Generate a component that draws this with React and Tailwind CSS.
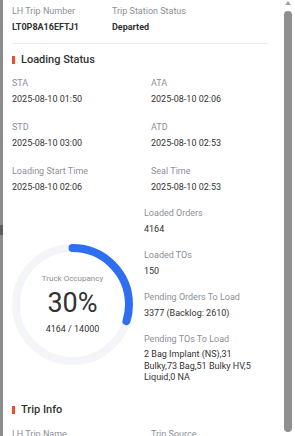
import React from 'react';

function Field({ label, value, bold }) {
    return (
        <div>
            <div className="text-[9px] leading-[12px] text-[#8b9099]">{label}</div>
            <div className={`mt-1 text-[9px] leading-[12px] text-[#333] ${bold ? 'font-bold' : ''}`}>{value}</div>
        </div>
    );
}

function SectionTitle({ children }) {
    return (
        <div className="flex items-center gap-[6px]">
            <span className="h-[8px] w-[3px] bg-[#ee4d2d]" />
            <span className="text-[11px] leading-[14px] font-medium text-[#333]">{children}</span>
        </div>
    );
}

function Occupancy({ loaded, capacity }) {
    const pct = loaded / capacity;
    const r = 56.5;
    const c = 2 * Math.PI * r;
    return (
        <div className="relative h-[121px] w-[121px]">
            <svg width="121" height="121" viewBox="0 0 121 121" className="-rotate-90">
                <circle cx="60.5" cy="60.5" r={r} fill="none" stroke="#f3f5f9" strokeWidth="8" />
                <circle
                    cx="60.5"
                    cy="60.5"
                    r={r}
                    fill="none"
                    stroke="#2e6ff2"
                    strokeWidth="8"
                    strokeLinecap="round"
                    style={{ strokeDasharray: `${c * pct} ${c}` }}
                />
            </svg>
            <div className="absolute inset-0 flex flex-col items-center justify-center">
                <div className="text-[8px] leading-[10px] text-[#8b9099]">Truck Occupancy</div>
                <div className="mt-1 text-[27px] leading-[30px] text-[#333]">30%</div>
                <div className="mt-[5px] text-[9px] leading-[12px] text-[#333]">4164 / 14000</div>
            </div>
        </div>
    );
}

export default function App() {
    return (
        <div className="flex h-[436px] w-[295px] overflow-hidden bg-white font-['Roboto',sans-serif]">
            <div className="flex w-[3px] flex-col bg-[#8c8c8c]">
                <div className="h-[225px]" />
                <div className="h-[10px] bg-[#5c5c5c]" />
            </div>

            <div className="flex-1 pl-[9px] pr-[15px] pt-[5px]">
                <div className="grid grid-cols-[100px_1fr]">
                    <Field label="LH Trip Number" value="LT0P8A16EFTJ1" bold />
                    <Field label="Trip Station Status" value="Departed" bold />
                </div>

                <div className="mt-[10px] h-px bg-[#ebebeb]" />

                <div className="mt-[9px]">
                    <SectionTitle>Loading Status</SectionTitle>
                </div>

                <div className="mt-[10px] grid grid-cols-[139px_1fr] gap-y-4">
                    <Field label="STA" value="2025-08-10 01:50" />
                    <Field label="ATA" value="2025-08-10 02:06" />
                    <Field label="STD" value="2025-08-10 03:00" />
                    <Field label="ATD" value="2025-08-10 02:53" />
                    <Field label="Loading Start Time" value="2025-08-10 02:06" />
                    <Field label="Seal Time" value="2025-08-10 02:53" />
                </div>

                <div className="mt-[14px] flex">
                    <div className="w-[132px] pt-[37px]">
                        <Occupancy loaded={4164} capacity={14000} />
                    </div>
                    <div className="flex w-[116px] flex-col gap-[14px]">
                        <Field label="Loaded Orders" value="4164" />
                        <Field label="Loaded TOs" value="150" />
                        <Field label="Pending Orders To Load" value="3377 (Backlog: 2610)" />
                        <div>
                            <div className="text-[9px] leading-[12px] text-[#8b9099]">Pending TOs To Load</div>
                            <div className="mt-1 text-[9px] leading-[11.5px] text-[#333]">
                                2 Bag Implant (NS),31 Bulky,73 Bag,51 Bulky HV,5 Liquid,0 NA
                            </div>
                        </div>
                    </div>
                </div>

                <div className="mt-[19px]">
                    <SectionTitle>Trip Info</SectionTitle>
                </div>

                <div className="mt-[11px] grid grid-cols-[139px_1fr]">
                    <Field label="LH Trip Name" value="" />
                    <Field label="Trip Source" value="" />
                </div>
            </div>

            <div className="flex w-[12px] flex-col pl-px">
                <div className="ml-px mt-px h-0 w-0 border-x-[3.5px] border-b-[4px] border-x-transparent border-b-[#a0a0a0]" />
                <div className="mt-[6px] h-[421px] w-[8px] rounded-full bg-[#8f8f8f]" />
            </div>
        </div>
    );
}
